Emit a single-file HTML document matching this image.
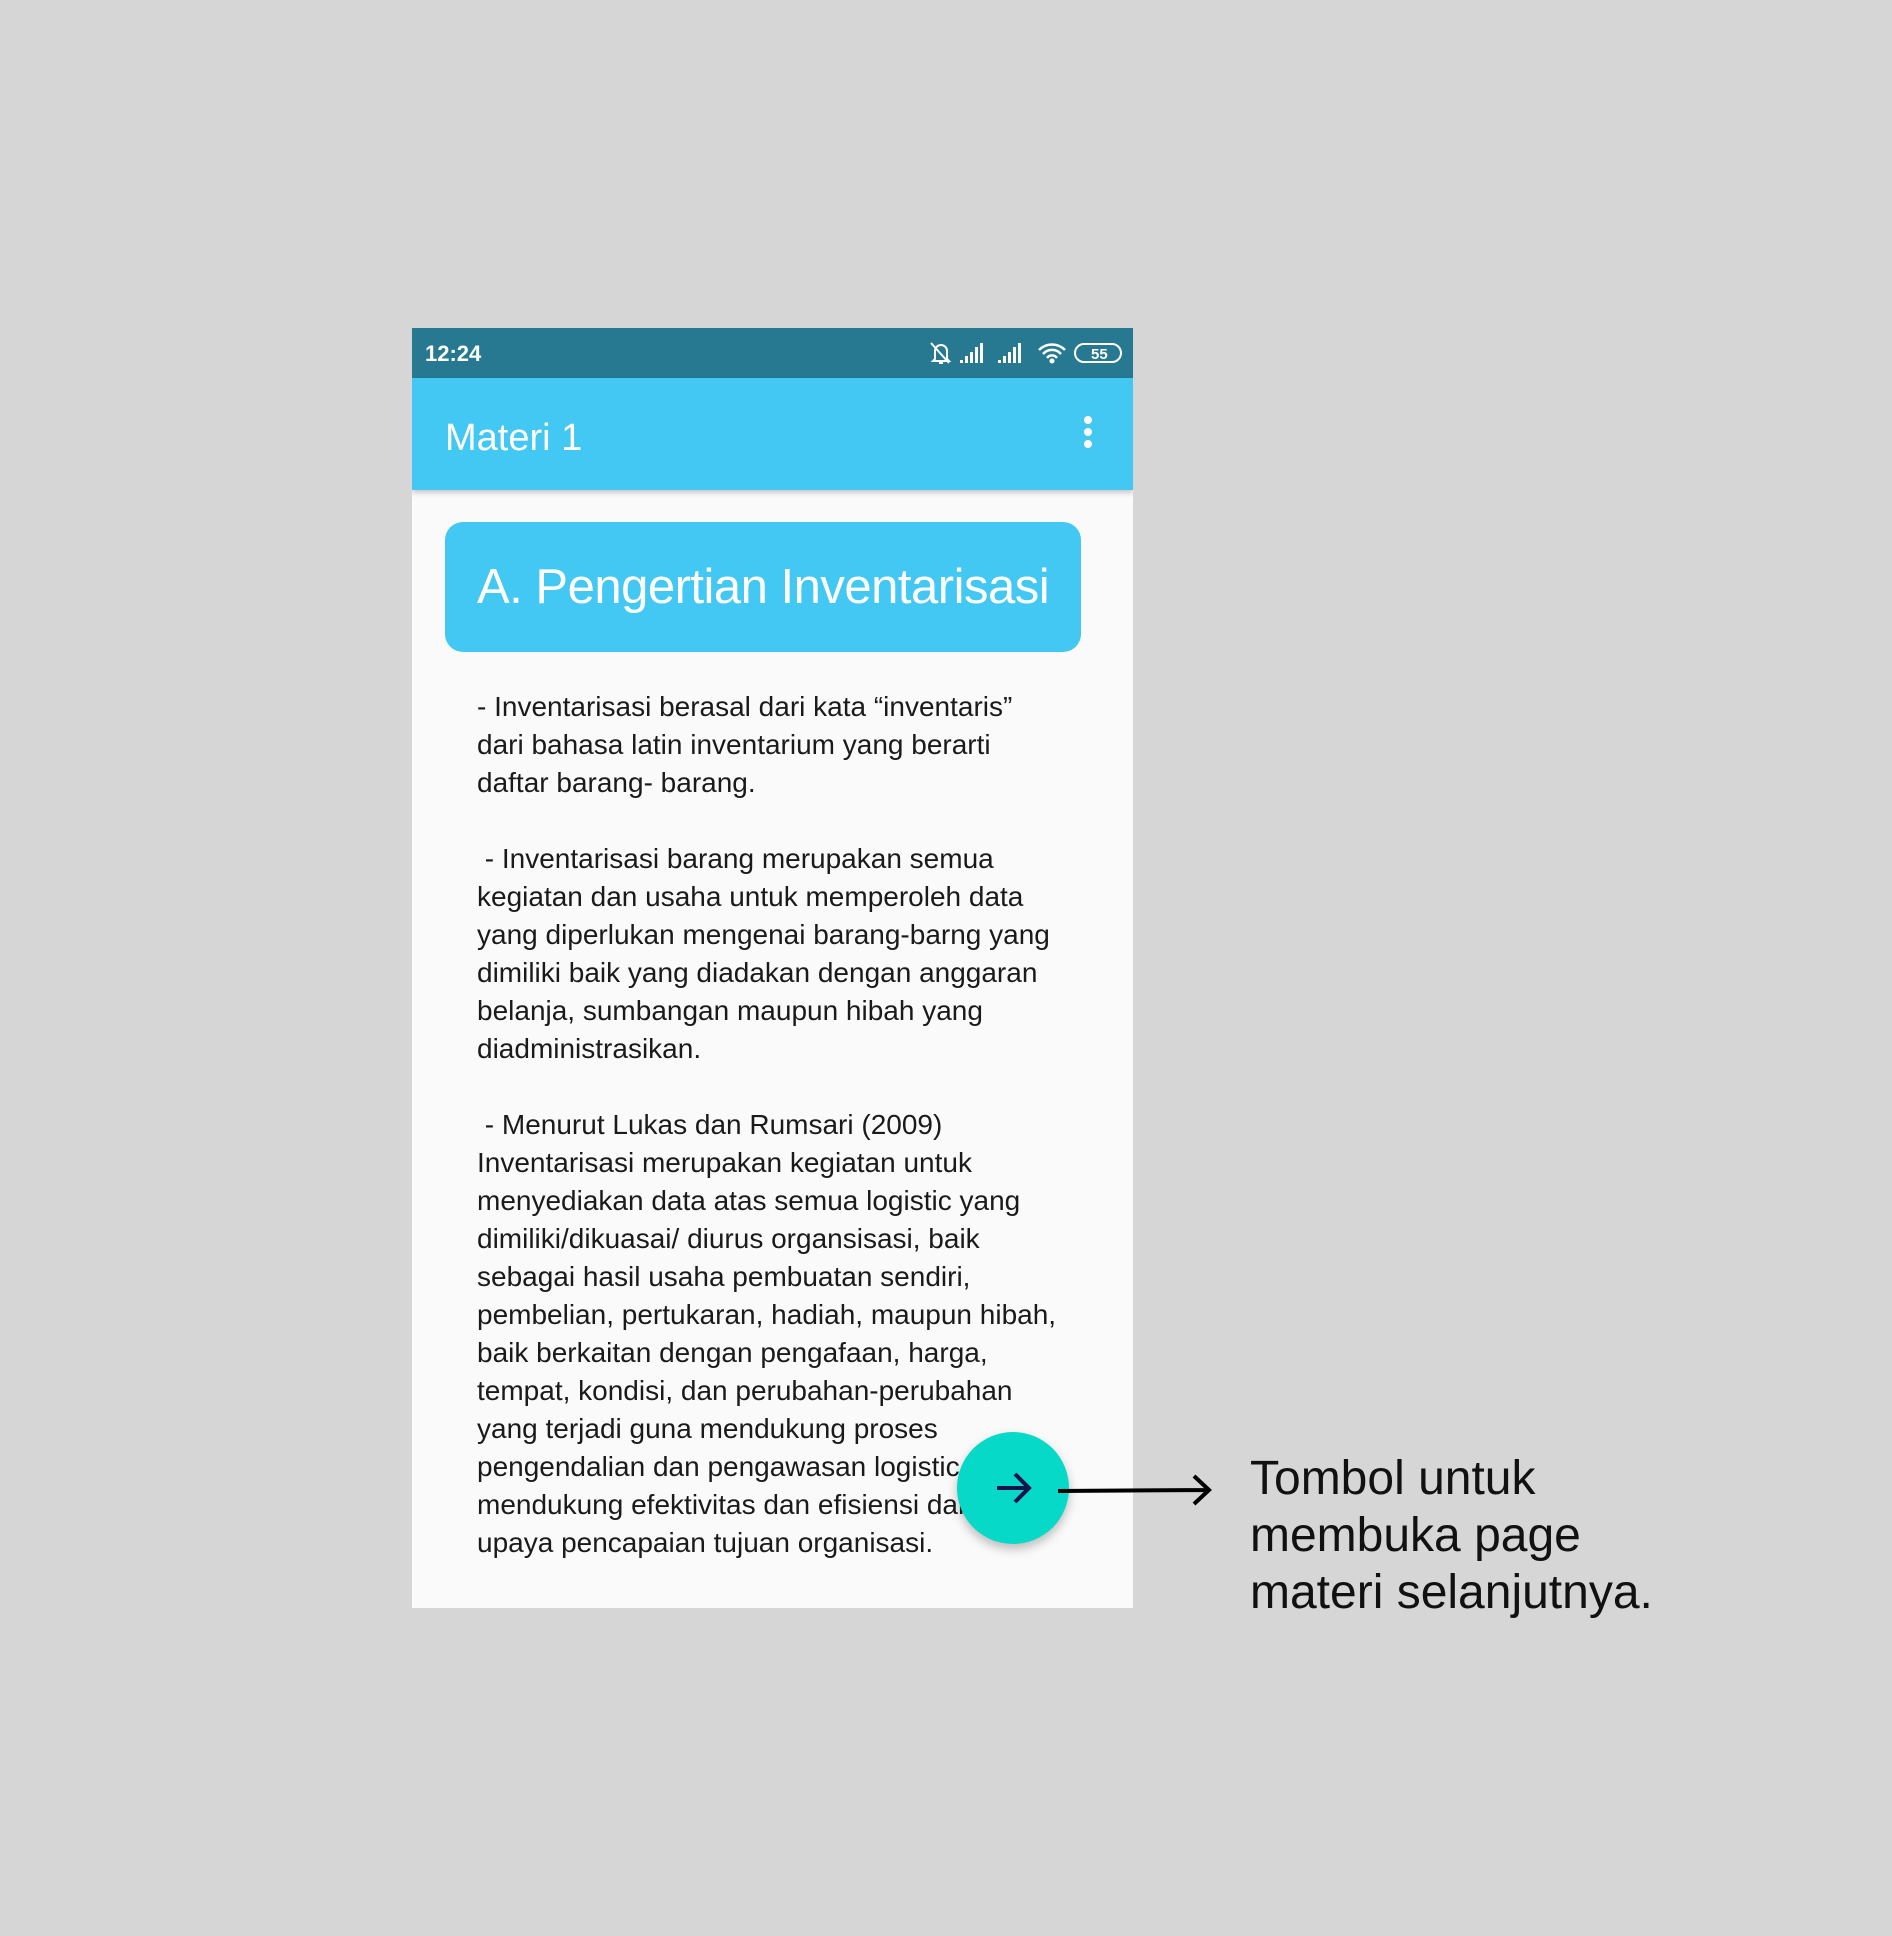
<!DOCTYPE html>
<html><head><meta charset="utf-8"><style>
*{margin:0;padding:0;box-sizing:border-box}
body{width:1892px;height:1936px;background:#d6d6d6;position:relative;overflow:hidden;font-family:"Liberation Sans",sans-serif}
.phone{position:absolute;left:412px;top:328px;width:721px;height:1280px;background:#fafafa;overflow:hidden}
.status{position:absolute;left:0;top:0;width:721px;height:50px;background:#267991;color:#fff}
.time{position:absolute;left:13px;top:13px;font-size:22px;font-weight:bold}
.appbar{position:absolute;left:0;top:50px;width:721px;height:112px;background:#43c7f3;box-shadow:0 3px 5px rgba(0,0,0,.2)}
.title{position:absolute;left:33px;top:39px;color:#fff;font-size:38px}
.dots{position:absolute;left:672px;top:38px}
.dots i{display:block;width:8px;height:8px;border-radius:50%;background:#fff;margin-bottom:4px}
.card{position:absolute;left:33px;top:194px;width:636px;height:130px;background:#43c7f3;border-radius:18px;color:#fff;font-size:49px;line-height:130px;padding-left:32px;letter-spacing:-0.5px}
.text{position:absolute;left:65px;top:360px;font-size:28px;line-height:38px;color:#1a1a1a;white-space:pre}
.fab{position:absolute;left:957px;top:1432px;width:112px;height:112px;border-radius:50%;background:#06d9c7;box-shadow:0 5px 10px rgba(0,0,0,.25)}
.note{position:absolute;left:1250px;top:1450px;font-size:48px;line-height:57px;color:#111}
</style></head><body>
<div class="phone">
 <div class="status"><div class="time">12:24</div>
  <svg style="position:absolute;left:515px;top:12px" width="200" height="28" viewBox="0 0 200 28" fill="none" stroke="#fff" stroke-width="2">
   <path d="M8 19 V11 a6 6 0 0 1 12 0 V19 L22 21 H6 Z M12 23 h4 M4 3 L22 23"/>
   <g fill="#fff" stroke="none">
    <rect x="33" y="20" width="3" height="3"/><rect x="38" y="16" width="3" height="7"/><rect x="43" y="12" width="3" height="11"/><rect x="48" y="7" width="3" height="16"/><rect x="53" y="3" width="3" height="20"/>
    <rect x="71" y="20" width="3" height="3"/><rect x="76" y="16" width="3" height="7"/><rect x="81" y="12" width="3" height="11"/><rect x="86" y="7" width="3" height="16"/><rect x="91" y="3" width="3" height="20"/>
    <circle cx="125" cy="21" r="2.5"/>
   </g>
   <path d="M112 10 a18 18 0 0 1 26 0 M116 14 a12 12 0 0 1 18 0 M120 18 a6 6 0 0 1 10 0" stroke-width="2.5"/>
   <rect x="148" y="4" width="46" height="18" rx="9"/>
   <text x="164" y="19" fill="#fff" stroke="none" font-size="15" font-weight="bold" font-family="Liberation Sans">55</text>
  </svg>
 </div>
 <div class="appbar"><div class="title">Materi 1</div><div class="dots"><i></i><i></i><i></i></div></div>
 <div class="card">A. Pengertian Inventarisasi</div>
 <div class="text">- Inventarisasi berasal dari kata “inventaris”
dari bahasa latin inventarium yang berarti
daftar barang- barang.

 - Inventarisasi barang merupakan semua
kegiatan dan usaha untuk memperoleh data
yang diperlukan mengenai barang-barng yang
dimiliki baik yang diadakan dengan anggaran
belanja, sumbangan maupun hibah yang
diadministrasikan.

 - Menurut Lukas dan Rumsari (2009)
Inventarisasi merupakan kegiatan untuk
menyediakan data atas semua logistic yang
dimiliki/dikuasai/ diurus organsisasi, baik
sebagai hasil usaha pembuatan sendiri,
pembelian, pertukaran, hadiah, maupun hibah,
baik berkaitan dengan pengafaan, harga,
tempat, kondisi, dan perubahan-perubahan
yang terjadi guna mendukung proses
pengendalian dan pengawasan logistic
mendukung efektivitas dan efisiensi dan
upaya pencapaian tujuan organisasi.</div>
</div>
<div class="fab"><svg width="112" height="112" viewBox="0 0 112 112" fill="none" stroke="#14134a" stroke-width="4"><path d="M40 56 H72 M58 42 L72 56 L58 70"/></svg></div>
<svg style="position:absolute;left:1056px;top:1470px" width="160" height="40" viewBox="0 0 160 40" fill="none" stroke="#000" stroke-width="4"><path d="M2 21 L152 20 M138 6 L153 20 L138 34"/></svg>
<div class="note">Tombol untuk<br>membuka page<br>materi selanjutnya.</div>
</body></html>
